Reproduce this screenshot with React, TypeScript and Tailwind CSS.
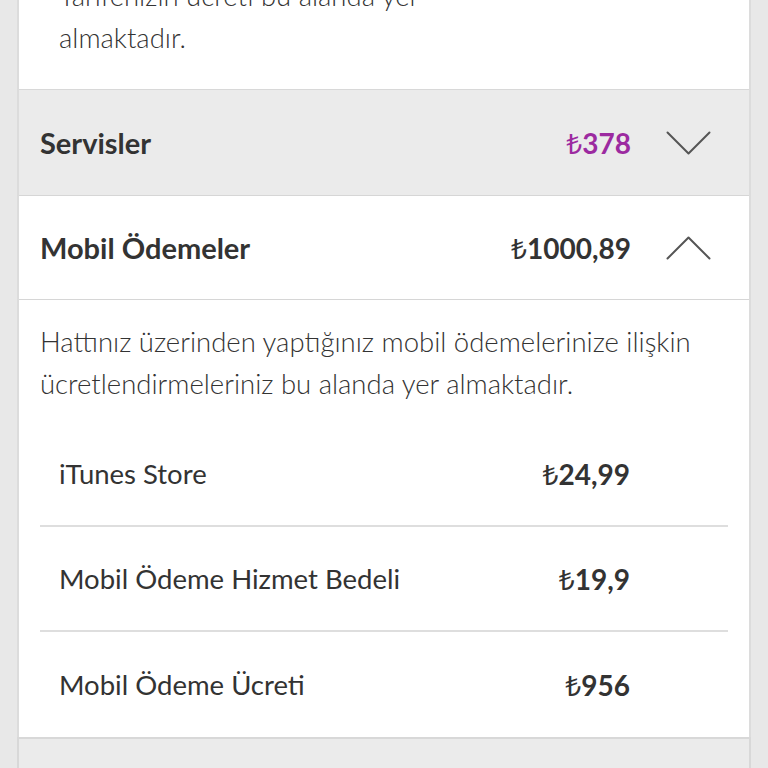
const Chevron = ({ up }: { up?: boolean }) => (
  <svg width="45" height="24" viewBox="0 0 45 24" fill="none" className="shrink-0">
    <polyline
      points={up ? "1.5,22.5 22.5,1.5 43.5,22.5" : "1.5,1.5 22.5,22.5 43.5,1.5"}
      stroke="#555555"
      strokeWidth="2"
      strokeLinecap="round"
      strokeLinejoin="round"
    />
  </svg>
);

// lira sign from Noto Sans, the rest in Lato
const Amount = ({ value }: { value: string }) => (
  <>
    <span className="font-['Noto_Sans',sans-serif] font-normal">₺</span>
    {value}
  </>
);

const items = [
  { name: "iTunes Store", amount: "24,99" },
  { name: "Mobil Ödeme Hizmet Bedeli", amount: "19,9" },
  { name: "Mobil Ödeme Ücreti", amount: "956" },
];

export default function App() {
  return (
    <div className="min-h-screen bg-[#e8e8e8] px-[17px] overflow-hidden font-['Lato','Noto_Sans',sans-serif] text-[#333333]">
      <div className="-mt-[25px] border-x-2 border-[#dcdcdc] bg-white">
        {/* previous section, expanded tail */}
        <div className="border-b border-[#d8d8d8] pl-[40px] pr-[21px] pb-[30px]">
          <p className="text-[27.5px] font-light leading-[42px]">
            Tarifenizin ücreti bu alanda yer
            <br />
            almaktadır.
          </p>
        </div>

        {/* Servisler */}
        <div className="flex h-[106px] items-center border-b border-[#d6d6d6] bg-[#ebebeb] pl-[21px] pr-[38px]">
          <span className="flex-1 text-[29px] font-bold">Servisler</span>
          <span className="text-[28px] font-bold text-[#9c2aa0]"><Amount value="378" /></span>
          <span className="ml-[35px]"><Chevron /></span>
        </div>

        {/* Mobil Ödemeler */}
        <div className="flex h-[104px] items-center border-b border-[#d6d6d6] bg-white pl-[21px] pr-[38px]">
          <span className="flex-1 text-[29px] font-bold">Mobil Ödemeler</span>
          <span className="text-[28px] font-bold"><Amount value="1000,89" /></span>
          <span className="ml-[35px]"><Chevron up /></span>
        </div>

        <div className="px-[21px] pt-[21px]">
          <p className="pb-[17px] text-[27.5px] font-light leading-[42px]">
            Hattınız üzerinden yaptığınız mobil ödemelerinize ilişkin
            <br />
            ücretlendirmeleriniz bu alanda yer almaktadır.
          </p>
          {items.map((it, i) => (
            <div
              key={it.name}
              className={`flex h-[105px] items-center pl-[19px] pr-[98px] ${i < items.length - 1 ? "border-b-2 border-[#dedede]" : "h-[104px]"}`}
            >
              <span className="flex-1 text-[27.5px]">{it.name}</span>
              <span className="text-[28px] font-bold"><Amount value={it.amount} /></span>
            </div>
          ))}
        </div>
      </div>

      {/* next section, collapsed */}
      <div className="h-[40px] border-x-2 border-t-2 border-[#d8d8d8] bg-[#ebebeb]" />
    </div>
  );
}
